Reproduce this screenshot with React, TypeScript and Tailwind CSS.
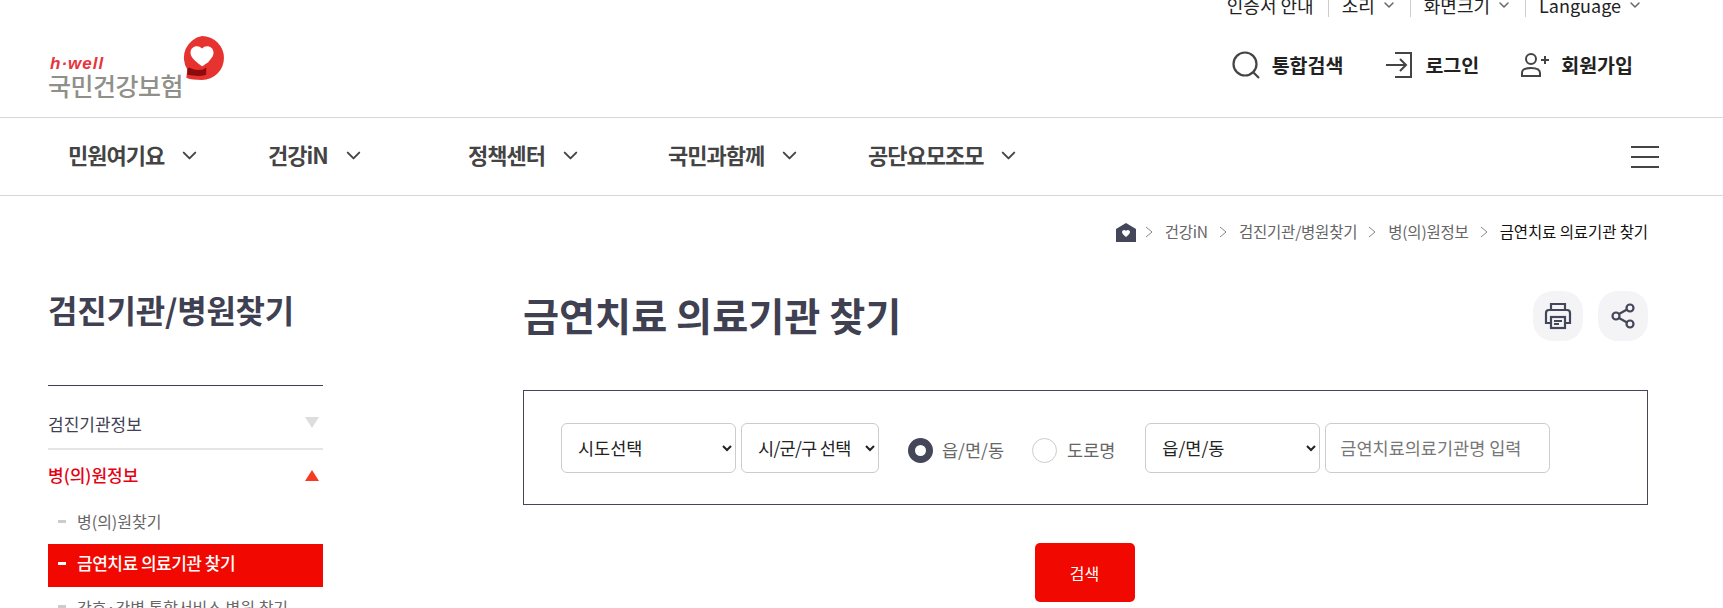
import { ChevronDown } from "lucide-react";

const navItems = ["민원여기요", "건강iN", "정책센터", "국민과함께", "공단요모조모"];
const crumbs = ["건강iN", "검진기관/병원찾기", "병(의)원정보"];

function Logo() {
  return (
    <div className="relative w-[180px] h-[70px]">
      <span className="absolute left-[2px] top-[18px] text-[17px] leading-[20px] font-bold italic text-[#e8343c] tracking-[1px] font-['Liberation_Sans',sans-serif]">
        h·well
      </span>
      <span className="absolute left-0 top-[35px] text-[25px] leading-[28px] font-medium text-[#8f9088] tracking-[-0.5px]">
        국민건강보험
      </span>
      <svg className="absolute left-[131px] top-[-1px]" width="46" height="46" viewBox="0 0 44 44">
        <path d="M22 1a21 21 0 0 1 0 42 C16 43 11 43 7 41 L8 33 A21 21 0 0 1 22 1z" fill="#e7332f" />
        <path d="M22 13c-3-4-11-3-11 4 0 5 6 9 11 13 2-1 4-3 6-4 2-3 5-5 5-9 0-7-8-8-11-4z" fill="#fff" />
        <path d="M8 32l2-1c3 2 7 3 13 2l3-2v7c-6 2-12 1-18 0z" fill="#8f0a0c" />
      </svg>
    </div>
  );
}

function App() {
  return (
    <div className="h-screen overflow-hidden bg-white font-['Noto_Sans_CJK_KR','Noto_Sans',sans-serif] text-[#222]">
      <header className="h-[118px] border-b border-[#d8d8d8] pl-[48px] pr-[75px] relative">
        <div className="h-[17px] mr-[5px] flex justify-end items-end overflow-hidden text-[18px] leading-[24px] text-[#222]">
          <span className="pr-[14px]">인증서 안내</span>
          <span className="flex items-center gap-[6px] border-l border-[#ccc] pl-[13px] pr-[13px]">
            소리 <ChevronDown size={16} strokeWidth={2.2} className="text-[#666]" />
          </span>
          <span className="flex items-center gap-[6px] border-l border-[#ccc] pl-[13px] pr-[13px]">
            화면크기 <ChevronDown size={16} strokeWidth={2.2} className="text-[#666]" />
          </span>
          <span className="flex items-center gap-[6px] border-l border-[#ccc] pl-[13px]">
            Language <ChevronDown size={16} strokeWidth={2.2} className="text-[#666]" />
          </span>
        </div>
        <div className="flex items-start justify-between">
          <div className="mt-[19px]">
            <Logo />
          </div>
          <div className="flex items-center mt-[32px] mr-[15px] text-[19.5px] font-bold leading-[32px] text-[#222]">
            <svg width="28" height="28" viewBox="0 0 28 28" fill="none" stroke="#444" strokeWidth="2.2" className="mr-[12px]">
              <circle cx="13" cy="13" r="11.5" />
              <path d="M21 21l6 6" />
            </svg>
            <span className="mr-[42px]">통합검색</span>
            <svg width="28" height="28" viewBox="0 0 28 28" fill="none" stroke="#444" strokeWidth="2" className="mr-[12px]">
              <path d="M10 2h16v24H10" />
              <path d="M1 14h20M15 8l6 6-6 6" />
            </svg>
            <span className="mr-[42px]">로그인</span>
            <svg width="29" height="26" viewBox="0 0 29 26" fill="none" stroke="#444" strokeWidth="2" className="mr-[11px]">
              <circle cx="10" cy="7" r="5" />
              <path d="M1 24v-3c0-4 4-5 9-5s9 1 9 5v3z" />
              <path d="M20 8h8M24 4v8" />
            </svg>
            <span>회원가입</span>
          </div>
        </div>
      </header>

      <nav className="h-[78px] border-b border-[#d8d8d8] pl-[68px] pr-[64px] flex items-center justify-between">
        <ul className="flex">
          {navItems.map((item) => (
            <li key={item} className="w-[200px] flex items-center gap-[14px] text-[22px] font-semibold tracking-[-1px] text-[#444] pb-[4px]">
              {item}
              <ChevronDown size={23} strokeWidth={2} className="text-[#444] mt-[2px]" />
            </li>
          ))}
        </ul>
        <div className="w-[28px] flex flex-col gap-[8px]">
          <span className="h-[2px] bg-[#444]" />
          <span className="h-[2px] bg-[#444]" />
          <span className="h-[2px] bg-[#444]" />
        </div>
      </nav>

      <div className="h-[72px] pr-[75px] flex items-center justify-end text-[15.5px] text-[#666] tracking-[-0.2px]">
        <svg width="20" height="19" viewBox="0 0 20 19" className="mr-[9px]">
          <path d="M0 6l10-6 10 6v13H0z" fill="#444659" />
          <path d="M10 14c-2-2-4-3-4-5 0-2 3-3 4-1 1-2 4-1 4 1 0 2-2 3-4 5z" fill="#fff" />
        </svg>
        {crumbs.map((c) => (
          <span key={c} className="flex items-center">
            <svg width="8" height="12" viewBox="0 0 8 12" fill="none" stroke="#888" className="mr-[12px]">
              <path d="M1 1l6 5-6 5" />
            </svg>
            <span className="mr-[11px]">{c}</span>
          </span>
        ))}
        <svg width="8" height="12" viewBox="0 0 8 12" fill="none" stroke="#888" className="mr-[12px]">
          <path d="M1 1l6 5-6 5" />
        </svg>
        <span className="text-[#111] tracking-[-0.1px]">금연치료 의료기관 찾기</span>
      </div>

      <div className="flex pl-[48px] pr-[75px]">
        <aside className="w-[275px] shrink-0">
          <h2 className="mt-[18px] h-[46px] mb-[53px] text-[32px] leading-[46px] font-bold text-[#3f4152] tracking-[-0.2px]">
            검진기관/병원찾기
          </h2>
          <div className="border-t border-[#3f4152]">
            <div className="h-[64px] pt-[13px] flex items-center justify-between border-b-2 border-[#e5e5e5] text-[17px] text-[#3f4152]">
              검진기관정보
              <span className="mr-[4px] mb-[2px] w-0 h-0 border-x-[7px] border-x-transparent border-t-[11px] border-t-[#ddd]" />
            </div>
            <div className="h-[54px] pb-[4px] flex items-center justify-between text-[17px] font-medium text-[#e60012]">
              병(의)원정보
              <span className="mr-[4px] w-0 h-0 border-x-[7px] border-x-transparent border-b-[11px] border-b-[#f73b22]" />
            </div>
            <div className="h-[40px] pb-[6px] flex items-center pl-[10px] gap-[11px] text-[16px] text-[#666]">
              <span className="w-[8px] h-[3px] bg-[#ccc]" />
              병(의)원찾기
            </div>
            <div className="h-[43px] pb-[5px] flex items-center pl-[10px] gap-[11px] bg-[#f10800] text-[17px] font-medium text-white tracking-[-0.5px]">
              <span className="w-[8px] h-[3px] bg-white" />
              금연치료 의료기관 찾기
            </div>
            <div className="h-[43px] pb-[4px] flex items-center pl-[10px] gap-[11px] text-[16px] text-[#666]">
              <span className="w-[8px] h-[3px] bg-[#ccc]" />
              간호·간병 통합서비스 병원 찾기
            </div>
          </div>
        </aside>

        <main className="ml-[200px] flex-1">
          <div className="mt-[23px] h-[50px] mb-[49px] flex items-center justify-between">
            <h1 className="text-[39.2px] font-bold text-[#3f4152] leading-[50px] pb-[4px]">금연치료 의료기관 찾기</h1>
            <div className="flex gap-[15px]">
              <button className="w-[50px] h-[50px] rounded-[20px] bg-[#f4f4f6] flex items-center justify-center">
                <svg width="28" height="28" viewBox="0 0 28 28" fill="none" stroke="#444659" strokeWidth="2.2">
                  <path d="M7 8V2h14v6" />
                  <path d="M7 21H2V11a3 3 0 0 1 3-3h18a3 3 0 0 1 3 3v10h-5" />
                  <rect x="7" y="15" width="14" height="11" />
                  <path d="M10 19h8M10 22h5" />
                </svg>
              </button>
              <button className="w-[50px] h-[50px] rounded-[20px] bg-[#f4f4f6] flex items-center justify-center">
                <svg width="26" height="28" viewBox="0 0 26 28" fill="none" stroke="#444659" strokeWidth="2.2">
                  <circle cx="20" cy="6" r="3.5" />
                  <circle cx="6" cy="14" r="3.5" />
                  <circle cx="20" cy="22" r="3.5" />
                  <path d="M9 12l8-4.5M9 16l8 4.5" />
                </svg>
              </button>
            </div>
          </div>

          <div className="h-[115px] border border-[#444659] pl-[37px] flex items-center text-[17.5px]">
            <select className="w-[175px] h-[50px] pl-[12px] bg-white border border-[#ccc] rounded-[6px] text-[#222]">
              <option>시도선택</option>
            </select>
            <select className="w-[138px] h-[50px] ml-[5px] pl-[12px] bg-white border border-[#ccc] rounded-[6px] text-[#222] tracking-[-0.7px]">
              <option>시/군/구 선택</option>
            </select>
            <label className="ml-[29px] mt-[5px] flex items-center gap-[9px] text-[#666]">
              <span className="w-[25px] h-[25px] rounded-full border-[7px] border-[#444659] bg-white" />
              읍/면/동
            </label>
            <label className="ml-[28px] mt-[5px] flex items-center gap-[10px] text-[#666]">
              <span className="w-[25px] h-[25px] rounded-full border border-[#ccc] bg-white" />
              도로명
            </label>
            <select className="w-[175px] h-[50px] ml-[30px] pl-[12px] bg-white border border-[#ccc] rounded-[6px] text-[#222]">
              <option>읍/면/동</option>
            </select>
            <input
              placeholder="금연치료의료기관명 입력"
              className="w-[225px] h-[50px] ml-[5px] px-[14px] border border-[#ccc] rounded-[6px] placeholder:text-[#777]"
            />
          </div>

          <div className="mt-[38px] pr-[2px] flex justify-center">
            <button className="w-[100px] h-[59px] rounded-[5px] bg-[#f10800] text-white text-[16px]">검색</button>
          </div>
        </main>
      </div>
    </div>
  );
}

export default App;
